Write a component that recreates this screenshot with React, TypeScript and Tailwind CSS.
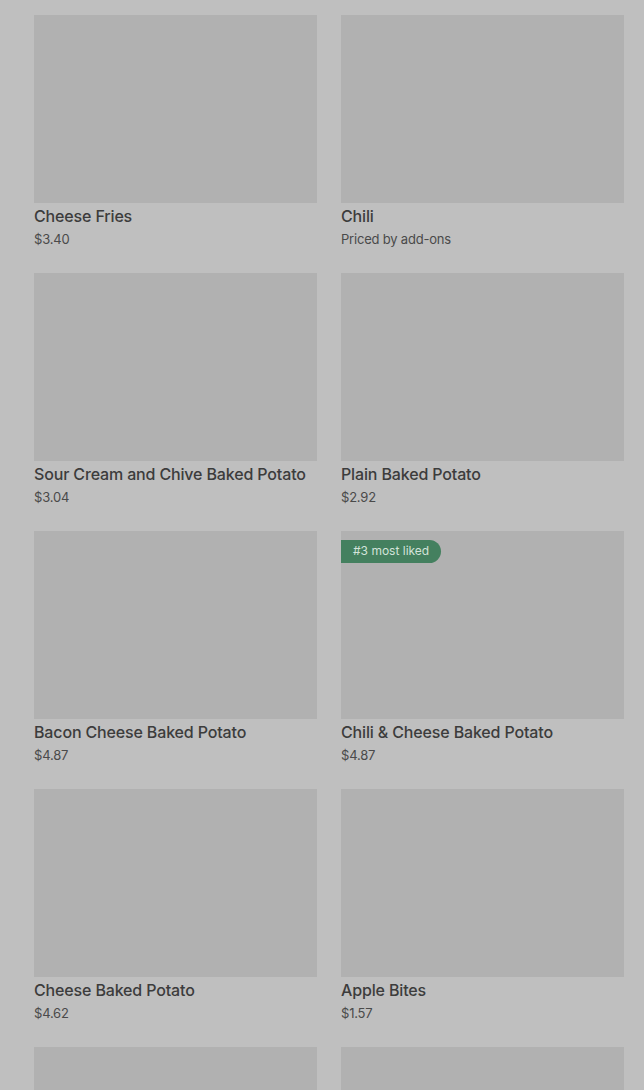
const items = [
  { name: 'Cheese Fries', price: '$3.40' },
  { name: 'Chili', price: 'Priced by add-ons' },
  { name: 'Sour Cream and Chive Baked Potato', price: '$3.04' },
  { name: 'Plain Baked Potato', price: '$2.92' },
  { name: 'Bacon Cheese Baked Potato', price: '$4.87' },
  { name: 'Chili & Cheese Baked Potato', price: '$4.87', badge: '#3 most liked' },
  { name: 'Cheese Baked Potato', price: '$4.62' },
  { name: 'Apple Bites', price: '$1.57' },
  { name: 'Loaded Baked Potato', price: '$5.10' },
  { name: 'Side Salad', price: '$2.50' },
];

function MenuItem({ name, price, badge }: { name: string; price: string; badge?: string }) {
  return (
    <div className="flex flex-col">
      <div className="relative h-[188px] w-full bg-[#b1b1b1]">
        {badge && (
          <span className="absolute top-[9px] left-0 flex h-[23px] w-[100px] items-center rounded-r-full bg-[#44805f] pb-px pl-[12px] text-[12px] text-[#d3e3da]">
            {badge}
          </span>
        )}
      </div>
      <h3 className="mt-px truncate text-[16px] leading-6 font-medium tracking-[-0.15px] text-[#3c3c3c]">
        {name}
      </h3>
      <p className="pt-px text-[13px] leading-5 tracking-[-0.2px] text-[#4a4a4a]">{price}</p>
    </div>
  );
}

export default function App() {
  return (
    <div
      className="min-h-screen bg-[#bfbfbf] pt-[15px] pr-[20px] pb-[25px] pl-[34px]"
      style={{ fontFamily: 'Inter, "Noto Sans", sans-serif' }}
    >
      <div className="grid grid-cols-2 gap-x-[24px] gap-y-[24px]">
        {items.map((item) => (
          <MenuItem key={item.name} {...item} />
        ))}
      </div>
    </div>
  );
}
